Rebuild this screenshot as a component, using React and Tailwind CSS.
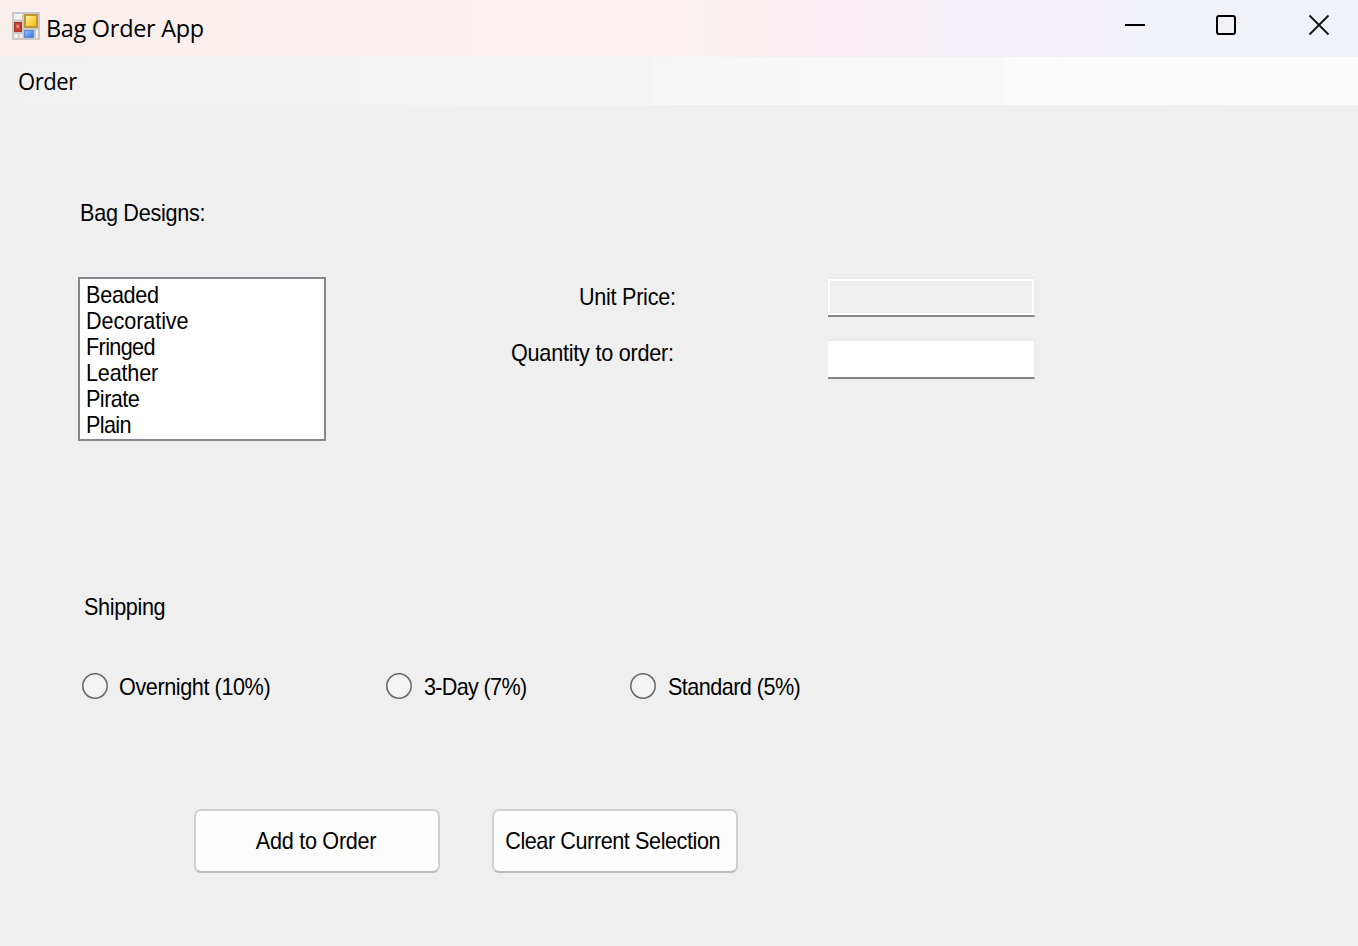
import React from "react";

const designs = [
  { name: "Beaded", fit: "tracking-[-0.3px]" },
  { name: "Decorative", fit: "tracking-[-0.08px]" },
  { name: "Fringed", fit: "tracking-[-0.7px]" },
  { name: "Leather", fit: "tracking-[-0.2px]" },
  { name: "Pirate", fit: "tracking-[-0.6px]" },
  { name: "Plain", fit: "tracking-[-0.7px]" },
];

const shipping = [
  { name: "Overnight (10%)", box: "w-[304px]", gap: "mr-[11px]", fit: "tracking-[-0.45px]" },
  { name: "3-Day (7%)", box: "w-[244px]", gap: "mr-[12px]", fit: "tracking-[-0.75px]" },
  { name: "Standard (5%)", box: "w-[244px]", gap: "mr-[12px]", fit: "tracking-[-0.6px]" },
];

function Text({ children, fit = "tracking-[-0.3px]", origin = "origin-left" }) {
  return (
    <span className={`block scale-x-90 whitespace-nowrap text-[24px] leading-[26px] ${origin} ${fit}`}>
      {children}
    </span>
  );
}

function AppIcon() {
  return (
    <svg width="28" height="28" viewBox="0 0 28 28">
      <defs>
        <linearGradient id="gold" x1="0" y1="0" x2="1" y2="1">
          <stop offset="0" stopColor="#fff0a0" />
          <stop offset="0.5" stopColor="#fbd850" />
          <stop offset="1" stopColor="#efb710" />
        </linearGradient>
        <linearGradient id="blue" x1="0" y1="0" x2="1" y2="1">
          <stop offset="0" stopColor="#8fbcf8" />
          <stop offset="1" stopColor="#3f78dc" />
        </linearGradient>
      </defs>
      <rect width="28" height="28" rx="1" fill="#c9c8c8" />
      <rect x="2" y="2" width="8" height="5.5" fill="#f5f0f0" />
      <rect x="2" y="22" width="4" height="4" fill="#f5f0f0" />
      <rect x="7.5" y="22" width="3" height="4" fill="#f5f0f0" />
      <rect x="24" y="18" width="2" height="8" fill="#f5f0f0" />
      <rect x="12" y="2" width="14" height="14" fill="#c2962e" />
      <rect x="14" y="4" width="10" height="10" fill="url(#gold)" />
      <rect x="2" y="10" width="8" height="10" fill="#b5352d" />
      <rect x="3.5" y="11.5" width="5" height="7" fill="#c9473c" />
      <rect x="4.5" y="13" width="2.5" height="3" fill="#e08a80" />
      <rect x="12" y="18" width="10" height="8" fill="#5f8cdc" />
      <rect x="13" y="19" width="8" height="6" fill="url(#blue)" />
    </svg>
  );
}

function TitleBar() {
  return (
    <header className="flex h-[57px] items-start bg-[linear-gradient(90deg,#f9f0ee_0%,#f9f0ef_50%,#f9eef3_61%,#f4eff6_70%,#f3f0f7_80%,#f0f2f8_87%,#f0f2f8_100%)] pl-3">
      <div className="mt-3">
        <AppIcon />
      </div>
      <h1 className="ml-[6px] mt-[11px] flex-1 origin-left scale-x-[0.978] whitespace-nowrap font-['Open_Sans',sans-serif] text-[24px] leading-[33px] tracking-[-0.3px]">
        Bag Order App
      </h1>
      <div className="mr-[28px] mt-[14px] flex">
        <svg width="22" height="22" viewBox="0 0 22 22" className="mr-[69px]">
          <path d="M1 11H21" stroke="#000" strokeWidth="2" />
        </svg>
        <svg width="22" height="22" viewBox="0 0 22 22" fill="none" className="mr-[71px]">
          <rect x="2" y="2" width="18" height="18" rx="2" stroke="#000" strokeWidth="2" />
        </svg>
        <svg width="22" height="22" viewBox="0 0 22 22">
          <path d="M1.5 1.5L20.5 20.5M20.5 1.5L1.5 20.5" stroke="#111" strokeWidth="1.8" />
        </svg>
      </div>
    </header>
  );
}

function Button({ children, fit }) {
  return (
    <button className="flex h-16 w-[246px] items-center justify-center rounded-[7px] border-2 border-[#d0d0d0] border-b-[#bbbbbb] bg-[#fdfdfd]">
      <Text origin="origin-center" fit={fit}>{children}</Text>
    </button>
  );
}

export default function App() {
  return (
    <div className="flex h-[946px] w-[1358px] flex-col overflow-hidden bg-[#efefef] font-['Liberation_Sans',Arial,sans-serif] text-black">
      <TitleBar />
      <nav className="h-12 bg-[linear-gradient(90deg,#f0f0f0_0%,#f2f2f2_22%,#f4f4f4_35%,#f4f4f4_48%,#f6f6f6_48%,#f8f8f8_61%,#f8f8f8_74%,#fafafa_74%,#fcfcfc_100%)] pl-[18px] pt-[7px]">
        <span className="block origin-left scale-x-[0.92] font-['Open_Sans',sans-serif] text-[24px] leading-[33px] tracking-[-0.5px]">
          Order
        </span>
      </nav>
      <main className="flex flex-col pl-[78px] pt-[95px]">
        <div className="pl-[2px]">
          <Text>Bag Designs:</Text>
        </div>
        <section className="mt-[51px] flex h-[164px] items-start">
          <ul className="h-[164px] w-[248px] border-2 border-[#828790] bg-white pl-[6px] pt-[3px]">
            {designs.map((d) => (
              <li key={d.name}>
                <Text fit={d.fit}>{d.name}</Text>
              </li>
            ))}
          </ul>
          <div className="ml-[185px] flex w-[317px] flex-col gap-[30px] pt-[7px]">
            <div className="pl-[68px]">
              <Text>Unit Price:</Text>
            </div>
            <Text fit="tracking-[-0.25px]">Quantity to order:</Text>
          </div>
          <div className="flex flex-col gap-[22px]">
            <div className="h-10 w-[207px] border-b-2 border-r border-t-2 border-b-[#858585] border-r-[#e9e9e9] border-t-[#ebebeb]">
              <div className="h-9 border-2 border-white" />
            </div>
            <input
              aria-label="Quantity to order"
              className="h-10 w-[207px] border-b-2 border-r border-t-2 border-b-[#858585] border-r-[#e9e9e9] border-t-[#ebebeb] bg-white outline-none"
            />
          </div>
        </section>
        <div className="mt-[153px] pl-[6px]">
          <Text fit="tracking-[-0.4px]">Shipping</Text>
        </div>
        <div className="mt-[52px] flex pl-1">
          {shipping.map((s) => (
            <label key={s.name} className={`flex items-center ${s.box}`}>
              <svg width="26" height="26" viewBox="0 0 26 26" className={`shrink-0 ${s.gap}`}>
                <circle cx="13" cy="13" r="12.2" fill="#f3f3f3" stroke="#666" strokeWidth="1.5" />
              </svg>
              <span className="mt-[2px]">
                <Text fit={s.fit}>{s.name}</Text>
              </span>
            </label>
          ))}
        </div>
        <div className="mt-[109px] flex gap-[52px] pl-[116px]">
          <Button fit="tracking-[-0.3px] pr-[2px]">Add to Order</Button>
          <Button fit="tracking-[-0.46px] pr-[5px]">Clear Current Selection</Button>
        </div>
      </main>
    </div>
  );
}
